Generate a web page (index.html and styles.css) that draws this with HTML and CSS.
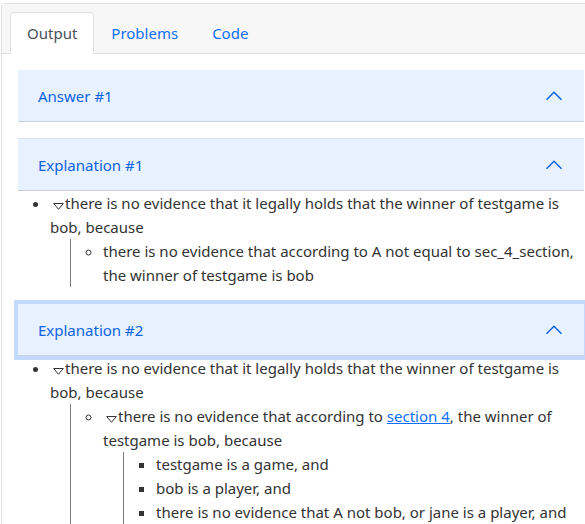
FILE: index.html
```html
<!DOCTYPE html>
<html lang="en">
<head>
<meta charset="utf-8">
<title>Output</title>
<link rel="stylesheet" href="styles.css">
</head>
<body>
<div class="page">
  <div class="card">
    <div class="card-header">
      <ul class="tabs">
        <li><a class="tab active">Output</a></li>
        <li><a class="tab">Problems</a></li>
        <li><a class="tab">Code</a></li>
      </ul>
    </div>
    <div class="card-body">
      <div class="accordion">
        <div class="acc-item">
          <div class="acc-header">
            <span class="acc-title">Answer #1</span>
            <svg class="chev" viewBox="0 0 16 16" width="20" height="20"><path d="M2 11L8 5L14 11" fill="none" stroke="currentColor" stroke-width="1.2"/></svg>
          </div>
          <div class="acc-body"></div>
        </div>
        <div class="acc-item">
          <div class="acc-header">
            <span class="acc-title">Explanation #1</span>
            <svg class="chev" viewBox="0 0 16 16" width="20" height="20"><path d="M2 11L8 5L14 11" fill="none" stroke="currentColor" stroke-width="1.2"/></svg>
          </div>
          <div class="acc-body">
            <ul class="tree">
              <li><svg class="tri" viewBox="0 0 11 7" width="11" height="7"><path d="M0.7 0.5H10.3L5.5 6.3Z" fill="none" stroke="currentColor" stroke-width="1"/></svg>there is no evidence that it legally holds that the winner of testgame is bob, because
                <ul class="sub circle">
                  <li>there is no evidence that according to A not equal to sec_4_section, the winner of testgame is bob</li>
                </ul>
              </li>
            </ul>
          </div>
        </div>
        <div class="acc-item">
          <div class="acc-header focused">
            <span class="acc-title">Explanation #2</span>
            <svg class="chev" viewBox="0 0 16 16" width="20" height="20"><path d="M2 11L8 5L14 11" fill="none" stroke="currentColor" stroke-width="1.2"/></svg>
          </div>
          <div class="acc-body">
            <ul class="tree">
              <li><svg class="tri" viewBox="0 0 11 7" width="11" height="7"><path d="M0.7 0.5H10.3L5.5 6.3Z" fill="none" stroke="currentColor" stroke-width="1"/></svg>there is no evidence that it legally holds that the winner of testgame is bob, because
                <ul class="sub circle">
                  <li><svg class="tri" viewBox="0 0 11 7" width="11" height="7"><path d="M0.7 0.5H10.3L5.5 6.3Z" fill="none" stroke="currentColor" stroke-width="1"/></svg>there is no evidence that according to <a class="link">section 4</a>, the winner of testgame is bob, because
                    <ul class="sub square">
                      <li>testgame is a game, and</li>
                      <li>bob is a player, and</li>
                      <li>there is no evidence that A not bob, or jane is a player, and</li>
                    </ul>
                  </li>
                </ul>
              </li>
            </ul>
          </div>
        </div>
      </div>
    </div>
  </div>
</div>
</body>
</html>
```
FILE: styles.css
```css
html, body {
  margin: 0;
  padding: 0;
  overflow: hidden;
  background: #fff;
}
body {
  font-family: "Noto Sans", "Open Sans", "Liberation Sans", sans-serif;
  font-size: 15px;
  line-height: 24px;
  color: #333;
}
.page {
  padding: 3px 0 0 1px;
}
.card {
  width: 600px;
  box-sizing: border-box;
  border: 1px solid #dfdfdf;
  border-radius: 4px;
  background: #fff;
}
.card-header {
  background: #f7f7f7;
  padding: 8px 16px 0;
  border-bottom: 1px solid #dcdcdc;
}
.tabs {
  display: flex;
  list-style: none;
  margin: 0 -8px -1px;
  padding: 0;
}
.tab {
  display: block;
  padding: 8px 16px;
  border: 1px solid transparent;
  border-radius: 4px 4px 0 0;
  color: #0d6efd;
}
.tab.active {
  background: #fff;
  color: #495057;
  border-color: #dee2e6 #dee2e6 #fff;
}
.card-body {
  padding: 16px;
}
.acc-item + .acc-item {
  border-top: 1px solid #dde3eb;
}
.acc-header {
  display: flex;
  align-items: center;
  height: 51px;
  padding: 0 20px;
  background: #e7f1ff;
  border-bottom: 1px solid #c6d0de;
  color: #0c63e4;
}
.acc-header.focused {
  position: relative;
  z-index: 1;
  box-shadow: 0 0 0 4px #c3dafd;
}
.acc-title {
  flex: 1;
}
.chev {
  display: block;
  color: #0c63e4;
}
.acc-body {
  padding-bottom: 16px;
}
.tree {
  margin: 0;
  padding-left: 32px;
}
.sub {
  margin: 0 0 0 20px;
  padding-left: 32px;
  border-left: 1px solid #7a7a7a;
}
.circle { list-style-type: circle; }
.square { list-style-type: square; }
.tri {
  margin: 0 1px 0 3px;
  vertical-align: -1px;
  color: #333;
}
.link {
  color: #0d6efd;
  text-decoration: underline;
}
```
